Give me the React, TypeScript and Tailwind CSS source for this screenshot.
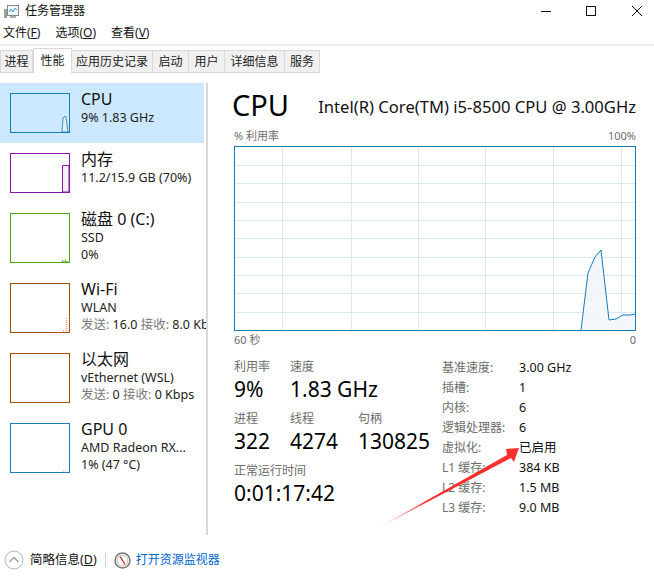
import type { ReactNode } from "react"

const tabs = [
    { label: "进程", width: "w-[33px]" },
    { label: "性能", width: "w-[39px]", active: true },
    { label: "应用历史记录", width: "w-[82px]" },
    { label: "启动", width: "w-[37px]" },
    { label: "用户", width: "w-[37px]" },
    { label: "详细信息", width: "w-[61px]" },
    { label: "服务", width: "w-[36px]" },
]

const specs = [
    ["基准速度:", "3.00 GHz"],
    ["插槽:", "1"],
    ["内核:", "6"],
    ["逻辑处理器:", "6"],
    ["虚拟化:", "已启用"],
    ["L1 缓存:", "384 KB"],
    ["L2 缓存:", "1.5 MB"],
    ["L3 缓存:", "9.0 MB"],
]

function Thumb({ color, tall, children }: { color: string; tall?: boolean; children?: ReactNode }) {
    return (
        <div className={`mt-1 w-[60px] shrink-0 border ${color} ${tall ? "h-[50px]" : "h-[40px]"}`}>
            <svg className="h-full w-full" viewBox={`0 0 58 ${tall ? 48 : 38}`}>
                {children}
            </svg>
        </div>
    )
}

function SideItem({ thumb, title, lines, active }: { thumb: ReactNode; title: string; lines: ReactNode[]; active?: boolean }) {
    return (
        <div className={`flex gap-[11px] pb-[10px] pl-[10px] pt-[6px] ${active ? "w-[204px] bg-[#cce8ff]" : "w-full"}`}>
            {thumb}
            <div className="min-w-0 flex-1 overflow-hidden whitespace-nowrap">
                <div className="h-5 text-[16px] leading-5 text-[#111]">{title}</div>
                {lines.map((line, i) => (
                    <div key={i} className="h-[17px] text-[12.5px] leading-[17px] text-[#222]">{line}</div>
                ))}
            </div>
        </div>
    )
}

function Stat({ label, value, className }: { label: string; value: string; className?: string }) {
    return (
        <div className={className}>
            <div className="h-4 whitespace-nowrap text-[12px] leading-4 text-[#6d6d6d]">{label}</div>
            <div className="h-[27px] whitespace-nowrap text-[21px] leading-7 text-black">{value}</div>
        </div>
    )
}

function CpuGraph() {
    const vLines = [47.5, 116.5, 183.5, 250.5, 318.5, 386.5]
    const hLines = [18.5, 36.5, 55.5, 73.5, 91.5, 110.5, 128.5, 146.5, 165.5]
    return (
        <div className="h-[185px] w-[402px] border border-[#117dbb]">
            <svg className="h-full w-full" viewBox="0 0 400 183">
                {vLines.map((x) => <line key={x} x1={x} x2={x} y1="0" y2="183" stroke="#d9eaf4" />)}
                {hLines.map((y) => <line key={y} x1="0" x2="400" y1={y} y2={y} stroke="#d9eaf4" />)}
                <polygon fill="#f1f6fa" fillOpacity="0.85" points="346,183 353,126 360,110 366,103 374,173 381,172 388,168 395,168 400,167 400,183" />
                <polyline fill="none" stroke="#117dbb" strokeWidth="1" points="346,183 353,126 360,110 366,103 374,173 381,172 388,168 395,168 400,167" />
            </svg>
        </div>
    )
}

export default function App() {
    return (
        <div className="relative h-[585px] w-[654px] overflow-hidden bg-white font-['Noto_Sans','Noto_Sans_CJK_SC',sans-serif] text-black">
            {/* Title bar */}
            <div className="flex h-[22px] items-center pl-1">
                <svg width="15" height="15" viewBox="0 0 15 15" className="shrink-0">
                    <rect x="0" y="5" width="3" height="9" fill="#9aa39a" />
                    <rect x="3.5" y="1.5" width="11" height="10" fill="#f4f8fb" stroke="#7d8a94" />
                    <path d="M5 8l2-3 2 3 2-4 2 2" fill="none" stroke="#3f9cc9" />
                    <rect x="6" y="12" width="6" height="2" fill="#a8b0a8" />
                </svg>
                <span className="ml-[6px] text-[12px] leading-4 text-[#111]">任务管理器</span>
                <div className="ml-auto flex items-center">
                    <svg width="12" height="12" viewBox="0 0 12 12" className="mr-[33px]"><path d="M1 6.5h10" stroke="#111" /></svg>
                    <svg width="12" height="12" viewBox="0 0 12 12" className="mr-[34px]"><rect x="1.5" y="1.5" width="9" height="9" fill="none" stroke="#111" /></svg>
                    <svg width="12" height="12" viewBox="0 0 12 12" className="mr-[11px]"><path d="M1 1l10 10M11 1L1 11" stroke="#111" /></svg>
                </div>
            </div>

            {/* Menu */}
            <div className="flex h-[22px] items-center gap-[15px] pl-[3px] text-[12px] leading-4 text-[#111]">
                <span>文件(<u>F</u>)</span>
                <span>选项(<u>O</u>)</span>
                <span>查看(<u>V</u>)</span>
            </div>
            <div className="h-[2px] bg-[#f0f0f0]" />

            {/* Tabs */}
            <div className="mt-[2px] flex h-[25px] items-end">
                {tabs.map((tab) => (
                    <div
                        key={tab.label}
                        className={`flex items-center justify-center border border-[#d9d9d9] text-[12px] text-[#222] ${tab.width} ${
                            tab.active ? "h-[25px] border-b-0 bg-white" : "-ml-px h-[23px] bg-[#f0f0f0] first:ml-0"
                        }`}
                    >
                        {tab.label}
                    </div>
                ))}
            </div>

            {/* Main */}
            <div className="mt-[10px] flex h-[452px]">
                <div className="w-[208px] shrink-0 border-r-2 border-[#d9d9d9]">
                    <SideItem
                        active
                        title="CPU"
                        lines={["9% 1.83 GHz"]}
                        thumb={
                            <Thumb color="border-[#117dbb]">
                                <path d="M51 38l1-14 2-2 1 2 2 14z" fill="#e3eef6" stroke="#117dbb" strokeWidth="0.8" />
                            </Thumb>
                        }
                    />
                    <SideItem
                        title="内存"
                        lines={["11.2/15.9 GB (70%)"]}
                        thumb={
                            <Thumb color="border-[#8b12ae]">
                                <path d="M51.5 38V11.5H58V38z" fill="#f4f2f4" stroke="#8b12ae" />
                            </Thumb>
                        }
                    />
                    <SideItem
                        title="磁盘 0 (C:)"
                        lines={["SSD", "0%"]}
                        thumb={
                            <Thumb tall color="border-[#4da60c]">
                                <path d="M51 48v-2h1v1h2v-2h1v2h2v1z" fill="#7ebf50" />
                            </Thumb>
                        }
                    />
                    <SideItem
                        title="Wi-Fi"
                        lines={[
                            "WLAN",
                            <><span className="text-[#777]">发送:</span> 16.0 <span className="text-[#777]">接收:</span> 8.0 Kbps</>,
                        ]}
                        thumb={
                            <Thumb tall color="border-[#a74f01]">
                                <path d="M52 47h2M55.5 34v14" stroke="#e8a08a" strokeWidth="1.5" strokeDasharray="1 1" />
                            </Thumb>
                        }
                    />
                    <SideItem
                        title="以太网"
                        lines={[
                            "vEthernet (WSL)",
                            <><span className="text-[#777]">发送:</span> 0 <span className="text-[#777]">接收:</span> 0 Kbps</>,
                        ]}
                        thumb={<Thumb tall color="border-[#a74f01]" />}
                    />
                    <SideItem
                        title="GPU 0"
                        lines={["AMD Radeon RX...", "1% (47 °C)"]}
                        thumb={
                            <Thumb tall color="border-[#117dbb]">
                                <path d="M52 47h1M54 47h1" stroke="#8fbcd8" />
                            </Thumb>
                        }
                    />
                </div>

                <div className="flex-1 pl-[26px]">
                    <div className="flex h-[44px] w-[402px] items-center justify-between">
                        <span className="-ml-0.5 text-[29px] leading-9">CPU</span>
                        <span className="pt-1 text-[16.6px] leading-6 text-[#111]">Intel(R) Core(TM) i5-8500 CPU @ 3.00GHz</span>
                    </div>
                    <div className="flex h-[19px] w-[402px] items-center justify-between text-[11px] text-[#6d6d6d]">
                        <span>% 利用率</span>
                        <span>100%</span>
                    </div>
                    <CpuGraph />
                    <div className="mt-[2px] flex h-[14px] w-[402px] items-center justify-between text-[11px] text-[#6d6d6d]">
                        <span>60 秒</span>
                        <span>0</span>
                    </div>

                    <div className="mt-[11px] flex">
                        <div className="w-[208px] shrink-0 pt-[1px]">
                            <div className="flex">
                                <Stat className="w-[56px]" label="利用率" value="9%" />
                                <Stat label="速度" value="1.83 GHz" />
                            </div>
                            <div className="mt-[9px] flex">
                                <Stat className="w-[56px]" label="进程" value="322" />
                                <Stat className="w-[68px]" label="线程" value="4274" />
                                <Stat label="句柄" value="130825" />
                            </div>
                            <Stat className="mt-[9px]" label="正常运行时间" value="0:01:17:42" />
                        </div>
                        <div className="grid grid-cols-[77px_auto] text-[12px] leading-5">
                            {specs.map(([label, value]) => (
                                <div key={label} className="contents">
                                    <span className="whitespace-nowrap text-[#6d6d6d]">{label}</span>
                                    <span className="whitespace-nowrap text-[12.5px] text-[#111]">{value}</span>
                                </div>
                            ))}
                        </div>
                    </div>
                </div>
            </div>

            {/* Footer */}
            <div className="flex h-[50px] items-center pl-1">
                <svg width="20" height="20" viewBox="0 0 20 20" className="shrink-0">
                    <circle cx="10" cy="10" r="9" fill="#fff" stroke="#b5b5b5" />
                    <path d="M5.5 12l4.5-4.5 4.5 4.5" fill="none" stroke="#9a9a9a" strokeWidth="1.3" />
                </svg>
                <span className="ml-[6px] text-[12.5px] text-[#111]">简略信息(<u>D</u>)</span>
                <div className="ml-2 h-[14px] w-px bg-[#cfcfcf]" />
                <svg width="17" height="17" viewBox="0 0 17 17" className="ml-2 shrink-0">
                    <circle cx="8.5" cy="8.5" r="7.5" fill="#f3f1ec" stroke="#777" strokeWidth="1.5" />
                    <circle cx="8.5" cy="8.5" r="5.2" fill="#fff" stroke="#c9c5bb" />
                    <path d="M6 4.5l5 8" stroke="#cc2a2a" strokeWidth="1.4" />
                </svg>
                <span className="ml-[5px] text-[12px] text-[#0066cc]">打开资源监视器</span>
            </div>

            {/* Annotation arrow */}
            <svg className="pointer-events-none absolute left-0 top-0" width="654" height="585" viewBox="0 0 654 585">
                <defs>
                    <linearGradient id="arrowFill" x1="378" y1="528" x2="520" y2="449" gradientUnits="userSpaceOnUse">
                        <stop offset="0" stopColor="#ff2a2a" stopOpacity="0.1" />
                        <stop offset="0.35" stopColor="#ff2a2a" />
                        <stop offset="1" stopColor="#f8322c" />
                    </linearGradient>
                </defs>
                <polygon fill="url(#arrowFill)" points="378,528 507,455 506,449 519,448 514,462 511,458" />
            </svg>
        </div>
    )
}
